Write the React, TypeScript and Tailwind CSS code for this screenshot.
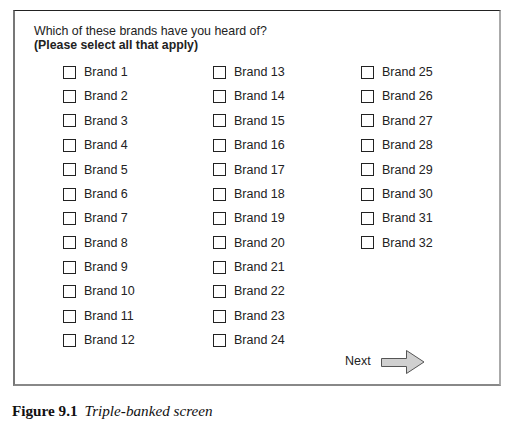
import React from "react";

const col1 = Array.from({ length: 12 }, (_, i) => i + 1);
const col2 = Array.from({ length: 12 }, (_, i) => i + 13);
const col3 = Array.from({ length: 8 }, (_, i) => i + 25);

function Item({ n }: { n: number }) {
  return (
    <div className="flex items-center h-[24.4px]">
      <div className="w-[13px] h-[13px] border border-[#222] bg-white shrink-0" />
      <span className="ml-[8px] text-[12.5px] leading-none text-[#222]">Brand {n}</span>
    </div>
  );
}

export default function App() {
  return (
    <div className="w-[511px] h-[426px] bg-white relative" style={{ fontFamily: '"Liberation Sans", Arial, sans-serif' }}>
      <div className="pt-[10px] pl-[13px]">
        <div className="w-[488px] h-[376px] border-t border-t-[#222] border-l-2 border-l-[#777] border-r-2 border-r-[#aaa] border-b-2 border-b-[#888] pl-[19px] pt-[13px] flex flex-col">
          <div className="text-[12.4px] leading-[14px] text-[#222]">Which of these brands have you heard of?</div>
          <div className="text-[12.3px] leading-[14px] font-bold text-[#222]">(Please select all that apply)</div>
          <div className="flex mt-[8px] pl-[29px]">
            <div className="w-[150px] flex flex-col">
              {col1.map((n) => (
                <Item key={n} n={n} />
              ))}
            </div>
            <div className="w-[148px] flex flex-col">
              {col2.map((n) => (
                <Item key={n} n={n} />
              ))}
            </div>
            <div className="flex flex-col">
              {col3.map((n) => (
                <Item key={n} n={n} />
              ))}
            </div>
          </div>
          <div className="flex items-center -mt-[3px] pl-[311px]">
            <span className="text-[12.5px] text-[#222]">Next</span>
            <svg width="44" height="24" viewBox="0 0 44 24" className="ml-[10px]">
              <polygon points="0.5,8.5 25.5,8.5 25.5,0.5 43,12 25.5,23.5 25.5,16.5 0.5,16.5" fill="#d0d0d0" stroke="#555" strokeWidth="1" />
            </svg>
          </div>
        </div>
      </div>
      <div className="absolute left-[12px] top-[400px] text-[15.2px] text-[#111]" style={{ fontFamily: '"Liberation Serif", "Times New Roman", serif' }}>
        <span className="font-bold">Figure 9.1</span>
        <span className="italic ml-[7px]">Triple-banked screen</span>
      </div>
    </div>
  );
}
